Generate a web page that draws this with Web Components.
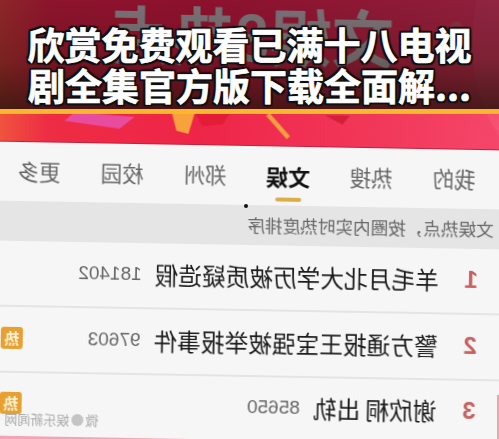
<!DOCTYPE html>
<html lang="zh">
<head>
<meta charset="utf-8">
<style>
    html, body { margin: 0; padding: 0; background: #f6f6f6; }
    body { width: 499px; height: 439px; overflow: hidden; font-family: "Noto Sans CJK SC", "Liberation Sans", sans-serif; }
</style>
</head>
<body>
<news-shot>
    <hot-banner slot="photo"></hot-banner>
    <tab-bar slot="photo"></tab-bar>
    <hint-bar slot="photo">文娱热点，按圈内实时热度排序</hint-bar>
    <rank-row slot="photo" rank="1" count="181402">羊毛月北大学历被质疑造假</rank-row>
    <rank-row slot="photo" rank="2" count="97603" hot>警方通报王宝强被举报事件</rank-row>
    <rank-row slot="photo" rank="3" count="85650" hot mark>谢欣桐 出轨</rank-row>
    <title-strip slot="title">欣赏免费观看已满十八电视<br>剧全集官方版下载全面解...</title-strip>
</news-shot>

<script>
class NewsShot extends HTMLElement {
    constructor() {
        super();
        this.attachShadow({ mode: 'open' });
        this.shadowRoot.innerHTML = `
            <style>
                :host { display: block; position: relative; width: 499px; height: 439px; overflow: hidden; background: #f6f6f6; }
                .photo {
                    display: flex;
                    flex-direction: column;
                    width: 530px;
                    margin: -7px 0 0 -15px;
                    transform: rotate(1deg) scaleX(-1);
                    transform-origin: 264px 220px;
                    filter: blur(0.55px);
                }
                .dot { position: absolute; left: 244px; top: 204px; width: 4px; height: 4px; border-radius: 50%; background: #111; }
                .edge { position: absolute; right: 0; top: 395px; width: 2px; height: 44px; background: #eda3b2; }
            </style>
            <div class="photo"><slot name="photo"></slot></div>
            <i class="dot"></i>
            <i class="edge"></i>
            <slot name="title"></slot>
        `;
    }
}

class TitleStrip extends HTMLElement {
    constructor() {
        super();
        this.attachShadow({ mode: 'open' });
        this.shadowRoot.innerHTML = `
            <style>
                :host {
                    display: block;
                    position: absolute;
                    left: 0; top: 0; right: 0;
                    height: 109px;
                    background: linear-gradient(180deg, rgba(60, 0, 25, 0.55) 0%, rgba(50, 5, 15, 0.62) 55%, rgba(35, 15, 10, 0.82) 100%);
                    border-bottom: 5px solid #fbb62c;
                    text-align: center;
                    color: #fff;
                    font: 700 37px/41px "Noto Sans CJK SC", sans-serif;
                    -webkit-text-stroke: 0.7px #fff;
                    text-shadow: 2px 0 1px #111, -2px 0 1px #111, 0 2px 1px #111, 0 -2px 1px #111, 2px 2px 1px #111, -2px -2px 1px #111, 2px -2px 1px #111, -2px 2px 1px #111;
                }
                div { padding-top: 24px; white-space: nowrap; }
            </style>
            <div><slot></slot></div>
        `;
    }
}

class HotBanner extends HTMLElement {
    constructor() {
        super();
        this.attachShadow({ mode: 'open' });
        this.shadowRoot.innerHTML = `
            <style>
                :host {
                    display: block;
                    position: relative;
                    height: 153px;
                    overflow: hidden;
                    background: linear-gradient(90deg, #f5486c 0%, #f23a5c 22%, #ee2548 60%, #ee2c44 88%, #f0603c 100%);
                    border-bottom: 1px solid #c81e3a;
                    box-sizing: border-box;
                }
                svg { position: absolute; left: 0; top: 0; display: block; }
                .big {
                    display: block;
                    padding: 6px 0 0 122px;
                    color: #c4fae8;
                    font: 700 62px/70px "Noto Sans CJK SC", sans-serif;
                    white-space: nowrap;
                }
            </style>
            <svg width="530" height="153" viewBox="0 0 530 153">
                <path d="M0 153 C40 120 50 60 40 0 L0 0Z" fill="#f55a78" opacity=".55"/>
                <polygon points="380,126 440,122 450,131 395,138" fill="#e84c9e"/>
                <polygon points="320,121 343,121 338,139 326,142" fill="#f7a23c"/>
                <polygon points="285,121 320,121 312,134 292,132" fill="#e31c38"/>
                <path d="M247 121l-21 23" stroke="#f3a23e" stroke-width="4.5"/>
                <polygon points="165,121 190,121 172,130" fill="#d41f38"/>
                <circle cx="60" cy="32" r="7" fill="#d98a8a" opacity=".55"/>
                <circle cx="50" cy="55" r="4" fill="#e0a060" opacity=".7"/>
            </svg>
            <span class="big">文娱8热点</span>
        `;
    }
}

class TabBar extends HTMLElement {
    constructor() {
        super();
        this.attachShadow({ mode: 'open' });
        const tabs = ['我的', '热搜', '文娱', '郑州', '校园', '更多'];
        this.shadowRoot.innerHTML = `
            <style>
                :host {
                    display: grid;
                    grid-template-columns: repeat(6, 83px);
                    justify-content: center;
                    align-items: start;
                    height: 59px;
                    padding-left: 4px;
                    background: #f6f6f6;
                    color: #666;
                    font: 400 21.5px/30px "Noto Sans CJK SC", sans-serif;
                    text-align: center;
                }
                span { padding-top: 14px; }
                .on { color: #111; font-weight: 700; font-size: 22px; position: relative; }
                .on::after { content: ""; position: absolute; left: 28px; bottom: -11px; width: 26px; height: 4px; border-radius: 2px; background: #dcae48; }
            </style>
            ${tabs.map(t => `<span class="${t === '文娱' ? 'on' : ''}">${t}</span>`).join('')}
        `;
    }
}

class HintBar extends HTMLElement {
    constructor() {
        super();
        this.attachShadow({ mode: 'open' });
        this.shadowRoot.innerHTML = `
            <style>
                :host {
                    display: block;
                    height: 40px;
                    padding-left: 19px;
                    background: #e5e5e5;
                    color: #666;
                    font: 400 17.6px/40px "Noto Sans CJK SC", sans-serif;
                    white-space: nowrap;
                }
            </style>
            <slot></slot>
        `;
    }
}

class RankRow extends HTMLElement {
    constructor() {
        super();
        this.attachShadow({ mode: 'open' });
        const rank = this.getAttribute('rank');
        const count = this.getAttribute('count');
        const mark = this.hasAttribute('mark');
        this.shadowRoot.innerHTML = `
            <style>
                :host {
                    display: flex;
                    position: relative;
                    align-items: center;
                    height: 61px;
                    padding: 0 20px 3px 34px;
                    background: #f6f6f6;
                    border-bottom: 2px solid #e4e4e4;
                    white-space: nowrap;
                }
                :host([mark]) { height: 60px; border-bottom: 12px solid #f2a6b4; }
                .rank { flex: none; width: 39px; color: #c9605e; font: 700 24px/30px "Liberation Sans", sans-serif; }
                .name { flex: none; color: #1b1b1b; font: 400 23.7px/30px "Noto Sans CJK SC", sans-serif; }
                .count { flex: none; margin-left: 13px; color: #666; font: 400 19px/30px "Liberation Sans", sans-serif; }
                .hot {
                    flex: none;
                    margin-left: auto;
                    width: 22px; height: 22px;
                    border-radius: 3px;
                    background: #e8a030;
                    color: #fff5dc;
                    font: 700 15px/22px "Noto Sans CJK SC", sans-serif;
                    text-align: center;
                }
                .mark {
                    position: absolute;
                    right: 25px;
                    bottom: 10px;
                    color: #a8a8a8;
                    font: 400 13px/14px "Noto Sans CJK SC", sans-serif;
                    display: flex;
                    align-items: center;
                    gap: 2px;
                }
                .mark i { width: 12px; height: 12px; border-radius: 50%; background: #c4c4c4; }
            </style>
            <span class="rank">${rank}</span>
            <span class="name"><slot></slot></span>
            <span class="count">${count}</span>
            ${this.hasAttribute('hot') ? '<span class="hot">热</span>' : ''}
            ${mark ? '<span class="mark">微<i></i>娱乐新闻网</span>' : ''}
        `;
    }
}

customElements.define('news-shot', NewsShot);
customElements.define('title-strip', TitleStrip);
customElements.define('hot-banner', HotBanner);
customElements.define('tab-bar', TabBar);
customElements.define('hint-bar', HintBar);
customElements.define('rank-row', RankRow);
</script>
</body>
</html>
